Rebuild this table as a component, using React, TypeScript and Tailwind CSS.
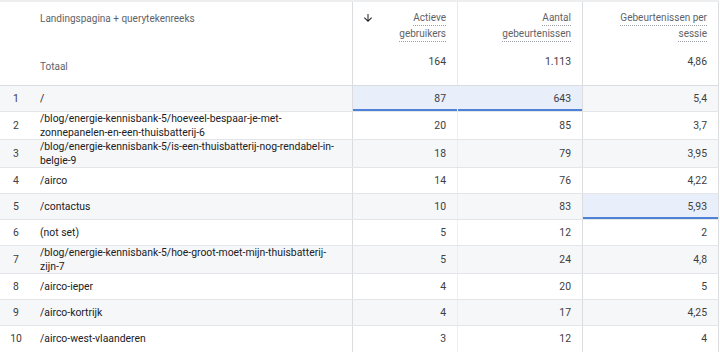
import React from "react";

type Row = {
  n: number;
  path: string[];
  a: string;
  b: string;
  c: string;
  hi?: number[];
};

const rows: Row[] = [
  { n: 1, path: ["/"], a: "87", b: "643", c: "5,4", hi: [1, 2] },
  { n: 2, path: ["/blog/energie-kennisbank-5/hoeveel-bespaar-je-met-", "zonnepanelen-en-een-thuisbatterij-6"], a: "20", b: "85", c: "3,7" },
  { n: 3, path: ["/blog/energie-kennisbank-5/is-een-thuisbatterij-nog-rendabel-in-", "belgie-9"], a: "18", b: "79", c: "3,95" },
  { n: 4, path: ["/airco"], a: "14", b: "76", c: "4,22" },
  { n: 5, path: ["/contactus"], a: "10", b: "83", c: "5,93", hi: [3] },
  { n: 6, path: ["(not set)"], a: "5", b: "12", c: "2" },
  { n: 7, path: ["/blog/energie-kennisbank-5/hoe-groot-moet-mijn-thuisbatterij-", "zijn-7"], a: "5", b: "24", c: "4,8" },
  { n: 8, path: ["/airco-ieper"], a: "4", b: "20", c: "5" },
  { n: 9, path: ["/airco-kortrijk"], a: "4", b: "17", c: "4,25" },
  { n: 10, path: ["/airco-west-vlaanderen"], a: "3", b: "12", c: "4" },
];

function HeadLine({ children }: { children: React.ReactNode }) {
  return (
    <span className="inline-block border-b border-dotted border-[#9aa0a6] leading-[14px]">{children}</span>
  );
}

function ArrowDown() {
  return (
    <svg width="12" height="12" viewBox="0 0 24 24" className="fill-[#202124]">
      <path d="M20 12l-1.41-1.41L13 16.17V4h-2v12.17l-5.58-5.59L4 12l8 8 8-8z" />
    </svg>
  );
}

export default function App() {
  return (
    <div
      className="w-[720px] h-[361px] bg-white overflow-hidden text-[10px] text-[#3c4043]"
      style={{ fontFamily: "Roboto, 'Liberation Sans', sans-serif" }}
    >
      <div className="w-[719px] border-t-2 border-[#eceef0]">
        {/* header */}
        <div className="grid grid-cols-[353px_105px_125px_136px] h-[84px] border-b border-[#dadce0]">
          <div className="border-r border-[#dadce0] flex flex-col pl-[40px] pt-[10px] text-[#5f6368]">
            <div className="leading-[14px]">Landingspagina + querytekenreeks</div>
            <div className="mt-[34px] leading-[14px]">Totaal</div>
          </div>
          <div className="border-r border-[#e8eaed] flex flex-col pt-[9px] pr-[11px] pl-[9px]">
            <div className="flex justify-between items-start">
              <div className="pt-[1px]"><ArrowDown /></div>
              <div className="flex flex-col items-end text-[#5f6368] gap-[1px]">
                <HeadLine>Actieve</HeadLine>
                <HeadLine>gebruikers</HeadLine>
              </div>
            </div>
            <div className="mt-[13px] text-right leading-[14px] text-[10.4px]">164</div>
          </div>
          <div className="border-r border-[#dadce0] flex flex-col pt-[9px] pr-[11px]">
            <div className="flex flex-col items-end text-[#5f6368] gap-[1px]">
              <HeadLine>Aantal</HeadLine>
              <HeadLine>gebeurtenissen</HeadLine>
            </div>
            <div className="mt-[13px] text-right leading-[14px] text-[10.4px]">1.113</div>
          </div>
          <div className="border-r border-[#dadce0] flex flex-col pt-[9px] pr-[11px]">
            <div className="flex flex-col items-end text-[#5f6368] gap-[1px]">
              <HeadLine>Gebeurtenissen per</HeadLine>
              <HeadLine>sessie</HeadLine>
            </div>
            <div className="mt-[13px] text-right leading-[14px] text-[10.4px]">4,86</div>
          </div>
        </div>
        {/* body */}
        {rows.map((r, i) => {
          const striped = r.n % 2 === 1;
          const last = i === rows.length - 1;
          const base = striped ? "bg-[#f6f7f9]" : "bg-white";
          const hiCls = "bg-[#e8eefa] shadow-[inset_0_-2px_0_#4d82d6]";
          const cell = (idx: number) => (r.hi && r.hi.includes(idx) ? hiCls : base);
          return (
            <div
              key={r.n}
              className={`grid grid-cols-[353px_105px_125px_136px] min-h-[26px] text-[10.4px] ${last ? "" : "border-b border-[#e3e5e8]"}`}
            >
              <div className={`flex items-center border-r border-[#dadce0] ${cell(0)}`}>
                <div className="w-[32px] text-center shrink-0 leading-[14px]">{r.n}</div>
                <div className="pl-[8px] text-[#202124] leading-[13.5px]">
                  {r.path.map((p, k) => (
                    <div key={k}>{p}</div>
                  ))}
                </div>
              </div>
              <div className={`flex items-center justify-end pr-[11px] border-r border-[#eceef0] ${cell(1)}`}>{r.a}</div>
              <div className={`flex items-center justify-end pr-[11px] border-r border-[#dadce0] ${cell(2)}`}>{r.b}</div>
              <div className={`flex items-center justify-end pr-[11px] border-r border-[#dadce0] ${cell(3)}`}>{r.c}</div>
            </div>
          );
        })}
      </div>
    </div>
  );
}
